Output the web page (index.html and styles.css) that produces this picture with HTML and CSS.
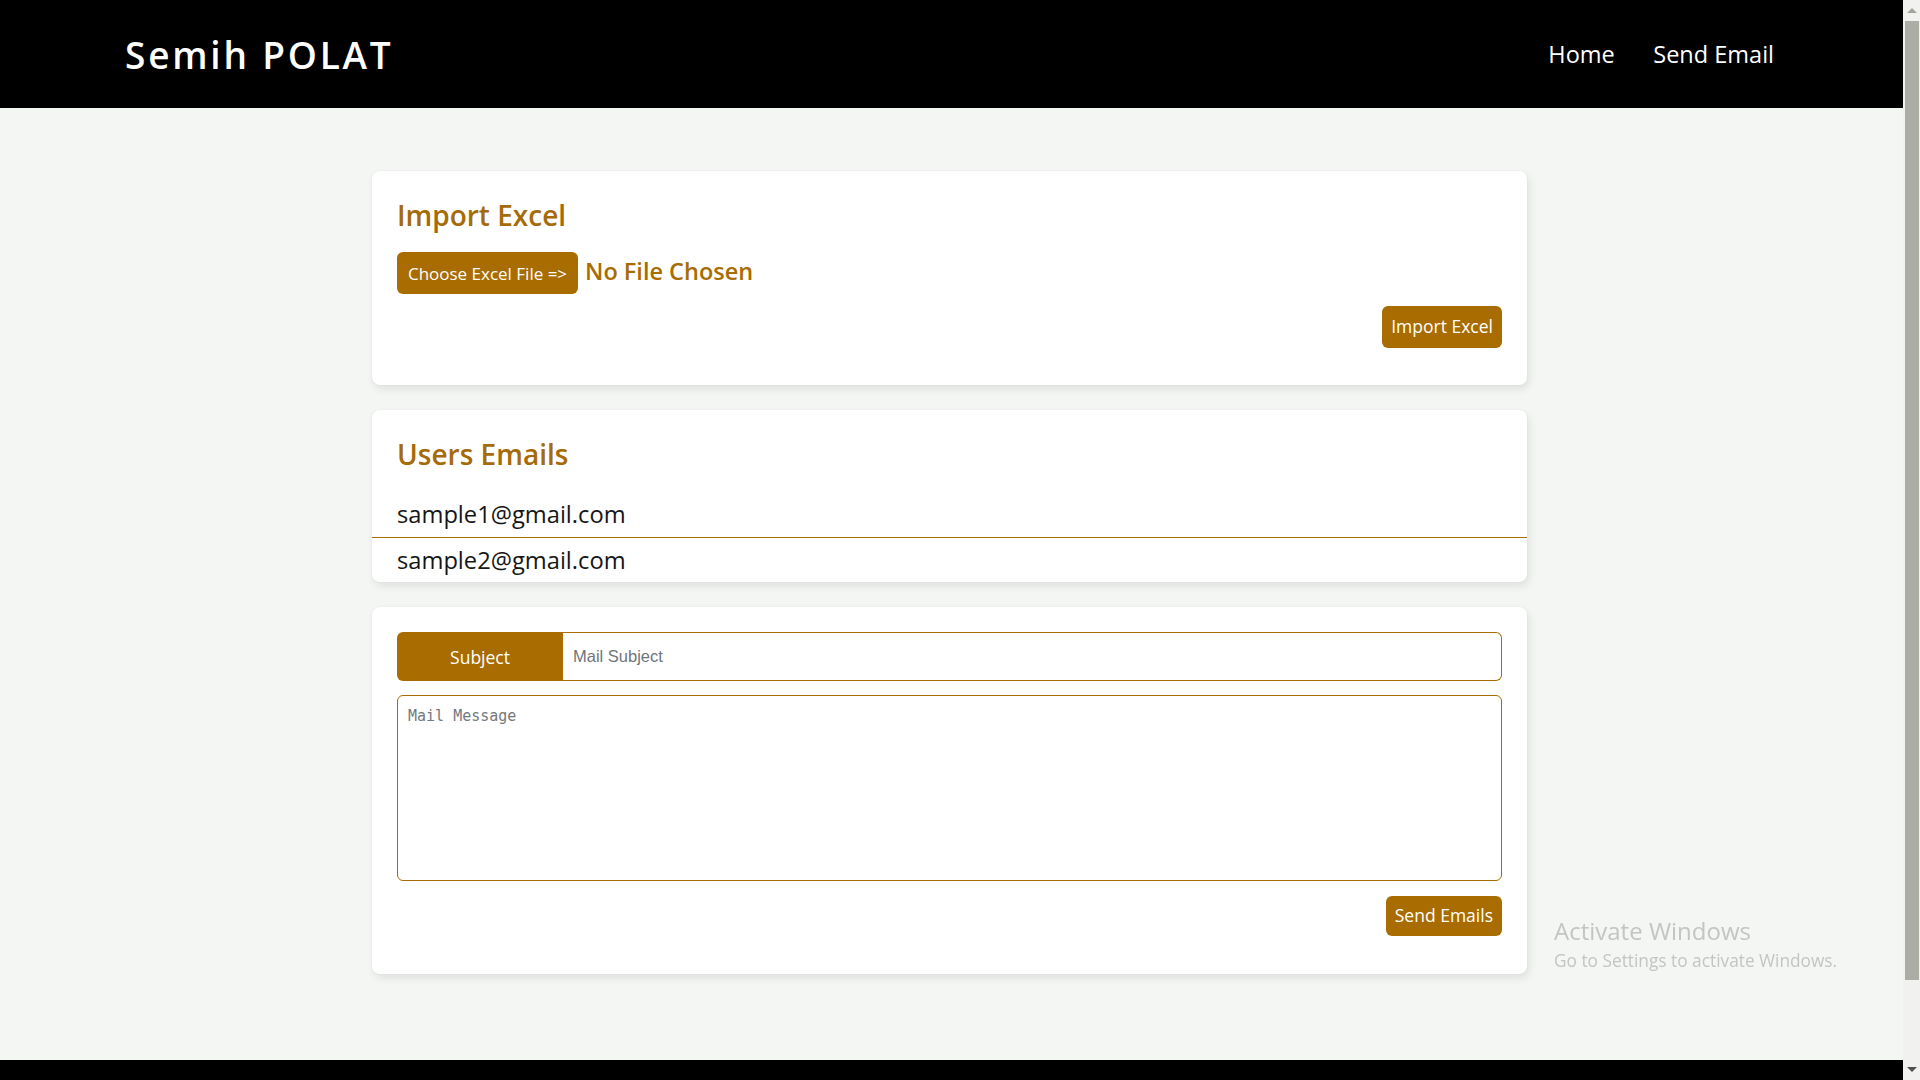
FILE: index.html
```html
<!DOCTYPE html>
<html lang="en">
<head>
<meta charset="utf-8">
<title>Semih POLAT - Send Email</title>
<link rel="stylesheet" href="styles.css">
</head>
<body>
<div class="page">
  <header class="navbar">
    <a class="brand" href="#">Semih POLAT</a>
    <nav class="nav-links">
      <a href="#">Home</a>
      <a href="#">Send Email</a>
    </nav>
  </header>

  <main class="main">
    <section class="card card-import">
      <h3 class="card-title">Import Excel</h3>
      <div class="file-row">
        <label class="btn btn-file">Choose Excel File =&gt;</label>
        <span class="file-name">No File Chosen</span>
      </div>
      <div class="actions">
        <button class="btn" type="button">Import Excel</button>
      </div>
    </section>

    <section class="card card-users">
      <h3 class="card-title">Users Emails</h3>
      <ul class="email-list">
        <li>sample1@gmail.com</li>
        <li>sample2@gmail.com</li>
      </ul>
    </section>

    <section class="card card-mail">
      <div class="input-group">
        <span class="input-label">Subject</span>
        <input class="subject-input" type="text" placeholder="Mail Subject">
      </div>
      <textarea class="message" placeholder="Mail Message"></textarea>
      <div class="actions">
        <button class="btn btn-send" type="button">Send Emails</button>
      </div>
    </section>
  </main>

  <footer class="footer"></footer>
</div>

<div class="scrollbar" aria-hidden="true">
  <span class="arrow arrow-up"></span>
  <span class="thumb"></span>
  <span class="arrow arrow-down"></span>
</div>

<div class="watermark" aria-hidden="true">
  <div class="wm-title">Activate Windows</div>
  <div class="wm-sub">Go to Settings to activate Windows.</div>
</div>
</body>
</html>
```

FILE: styles.css
```css
* {
  box-sizing: border-box;
}

html, body {
  margin: 0;
  padding: 0;
  height: 1080px;
  overflow: hidden;
}

body {
  display: flex;
  font-family: "Open Sans", "Noto Sans", sans-serif;
  background: #f4f6f4;
  color: #1b1b1b;
}

.page {
  flex: 1;
  display: flex;
  flex-direction: column;
  min-width: 0;
}

/* Navbar */
.navbar {
  height: 108px;
  flex: none;
  background: #000;
  display: flex;
  align-items: center;
  justify-content: space-between;
  padding: 0 129px 0 125px;
}

.brand {
  color: #fff;
  text-decoration: none;
  font-size: 37px;
  font-weight: 600;
  letter-spacing: 2.8px;
  line-height: 1;
  margin-top: 0;
}

.nav-links {
  display: flex;
  gap: 38.5px;
  margin-top: 2px;
}

.nav-links a {
  color: #fff;
  text-decoration: none;
  font-size: 23.5px;
  line-height: 1;
}

/* Main */
.main {
  flex: 1;
  display: flex;
  flex-direction: column;
  gap: 25px;
  padding-top: 63px;
}

.card {
  width: 1155px;
  margin-left: 372px;
  background: #fff;
  border-radius: 8px;
  box-shadow: 2px 4px 8px rgba(0, 0, 0, 0.09), 0 0 2px rgba(0, 0, 0, 0.06);
}

.card-title {
  margin: 0 0 22px;
  font-size: 28px;
  font-weight: 600;
  line-height: 34px;
  color: #a66a08;
}

.card-import {
  padding: 25px 25px 37px;
}

.card-import .card-title {
  padding-top: 2px;
  margin-bottom: 20px;
}

.file-row {
  display: flex;
  align-items: center;
  gap: 7px;
  margin-bottom: 12px;
}

.btn {
  display: inline-flex;
  align-items: center;
  justify-content: center;
  height: 42px;
  padding: 0 9px;
  border: none;
  border-radius: 6px;
  background: #a86c00;
  color: #fff;
  font-family: "Open Sans", "Noto Sans", sans-serif;
  font-size: 17.5px;
  line-height: 1;
  cursor: pointer;
}

.btn-file {
  width: 181px;
  font-size: 17px;
  padding: 0 8px;
}

.file-name {
  font-size: 23.5px;
  font-weight: 600;
  color: #a86c00;
  line-height: 1;
  margin-top: -2px;
}

.actions {
  display: flex;
  justify-content: flex-end;
}

/* Users emails */
.card-users {
  padding-top: 25px;
}

.card-users .card-title {
  padding: 2px 25px 0;
  margin-bottom: 22px;
}

.email-list {
  list-style: none;
  margin: 0;
  padding: 0;
}

.email-list li {
  height: 44px;
  padding: 0 25px;
  font-size: 23.7px;
  line-height: 44px;
  color: #161616;
}

.email-list li:first-child {
  height: 45px;
  line-height: 43px;
  border-bottom: 1px solid #a86c00;
}

/* Mail form */
.card-mail {
  padding: 25px 25px 38px;
}

.input-group {
  display: flex;
  height: 49px;
}

.input-label {
  width: 166px;
  flex: none;
  display: flex;
  align-items: center;
  justify-content: center;
  background: #a86c00;
  color: #fff;
  font-size: 17.5px;
  border-radius: 6px 0 0 6px;
}

.subject-input {
  flex: 1;
  min-width: 0;
  height: 49px;
  border: 1px solid #a86c00;
  border-left: none;
  border-radius: 0 6px 6px 0;
  padding: 0 10px;
  font-family: "Liberation Sans", Arial, sans-serif;
  font-size: 16.5px;
  color: #333;
  outline: none;
}

.subject-input::placeholder {
  color: #6f757b;
}

.message {
  display: block;
  width: 100%;
  height: 186px;
  margin-top: 14px;
  border: 1px solid #a86c00;
  border-radius: 6px;
  padding: 11px 10px;
  font-family: "DejaVu Sans Mono", "Liberation Mono", monospace;
  font-size: 15px;
  resize: none;
  outline: none;
}

.message::placeholder {
  color: #74797e;
}

.card-mail .actions {
  margin-top: 15px;
}

.btn-send {
  height: 40px;
}

/* Footer */
.footer {
  height: 20px;
  flex: none;
  background: #000;
}

/* Fake scrollbar */
.scrollbar {
  width: 17px;
  flex: none;
  height: 1080px;
  background: #f1f2ef;
  display: flex;
  flex-direction: column;
  align-items: center;
}

.arrow {
  width: 0;
  height: 0;
  border-left: 5px solid transparent;
  border-right: 5px solid transparent;
}

.arrow-up {
  margin-top: 8px;
  border-bottom: 5px solid #a3a49b;
}

.thumb {
  width: 17px;
  margin-top: 8px;
  height: 959px;
  background: #acaea5;
  border-left: 2px solid #f1f2ef;
  border-right: 1px solid #f1f2ef;
}

.arrow-down {
  margin-top: auto;
  margin-bottom: 8px;
  border-top: 5px solid #505050;
}

/* Windows activation watermark */
.watermark {
  position: fixed;
  left: 1554px;
  top: 915px;
  color: #c4c5c2;
  font-family: "Open Sans", "Noto Sans", sans-serif;
  pointer-events: none;
}

.wm-title {
  font-size: 24px;
  line-height: 32px;
}

.wm-sub {
  font-size: 17.3px;
  line-height: 24px;
  margin-top: 2px;
}
```
